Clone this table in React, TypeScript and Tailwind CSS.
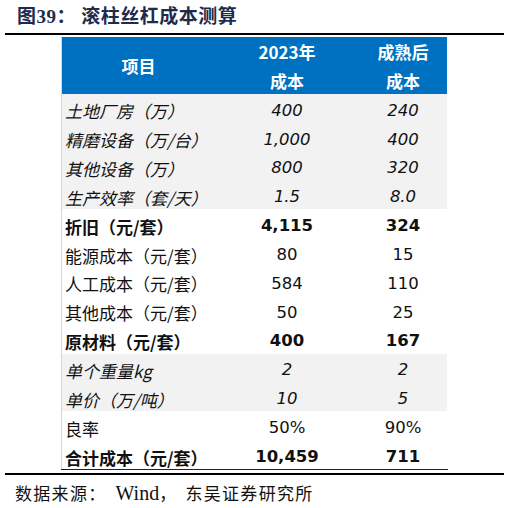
import React from "react";

type Row = {
  label: string;
  a: string;
  b: string;
  shade?: boolean;
  italic?: boolean;
  bold?: boolean;
};

const rows: Row[] = [
  { label: "土地厂房（万）", a: "400", b: "240", shade: true, italic: true },
  { label: "精磨设备（万/台）", a: "1,000", b: "400", shade: true, italic: true },
  { label: "其他设备（万）", a: "800", b: "320", shade: true, italic: true },
  { label: "生产效率（套/天）", a: "1.5", b: "8.0", shade: true, italic: true },
  { label: "折旧（元/套）", a: "4,115", b: "324", bold: true },
  { label: "能源成本（元/套）", a: "80", b: "15" },
  { label: "人工成本（元/套）", a: "584", b: "110" },
  { label: "其他成本（元/套）", a: "50", b: "25" },
  { label: "原材料（元/套）", a: "400", b: "167", bold: true },
  { label: "单个重量kg", a: "2", b: "2", shade: true, italic: true },
  { label: "单价（万/吨）", a: "10", b: "5", shade: true, italic: true },
  { label: "良率", a: "50%", b: "90%" },
  { label: "合计成本（元/套）", a: "10,459", b: "711", bold: true },
];

const cjk = "font-['Noto_Sans_CJK_SC',sans-serif]";
const num = "font-['DejaVu_Sans','Noto_Sans_CJK_SC',sans-serif]";

export default function App() {
  return (
    <div className="w-[509px] h-[508px] bg-white overflow-hidden">
      {/* title */}
      <div className="h-[33px] pl-[17px] pt-[5px] text-[19px] leading-[24px] font-bold text-[#1f2b4d] font-['Liberation_Serif','Noto_Sans_CJK_SC',serif] tracking-[0.5px]">
        图39：&nbsp;滚柱丝杠成本测算
      </div>
      <div className="ml-[5px] mr-[5px] h-[2px] bg-black" />

      {/* table */}
      <div className="mt-[2px] ml-[61px] w-[386px] border-l border-[#d4d4d4]">
        <div className={`grid grid-cols-[153px_144px_88px] h-[57px] bg-[#0070c0] text-white font-bold text-[17px] ${cjk}`}>
          <div className="flex items-center justify-center">项目</div>
          <div className="flex flex-col items-center justify-center leading-[29px]">
            <span>2023年</span>
            <span>成本</span>
          </div>
          <div className="flex flex-col items-center justify-center leading-[29px]">
            <span>成熟后</span>
            <span>成本</span>
          </div>
        </div>
        {rows.map((r) => (
          <div
            key={r.label}
            className={`grid grid-cols-[153px_144px_88px] h-[28.85px] pt-[5px] items-center text-[#111] ${
              r.shade ? "bg-[#f2f2f2]" : "bg-white"
            } ${r.italic ? "italic" : ""} ${r.bold ? "font-bold" : ""}`}
          >
            <div className={`pl-[3px] text-[17px] leading-none whitespace-nowrap ${cjk}`}>{r.label}</div>
            <div className={`text-center text-[16.5px] leading-none ${num}`}>{r.a}</div>
            <div className={`text-center text-[16.5px] leading-none ${num}`}>{r.b}</div>
          </div>
        ))}
      </div>
      <div className="ml-[61px] w-[387px] h-px bg-[#222]" />
      <div className="mt-[3px] ml-[5px] mr-[5px] h-[2px] bg-black" />

      {/* source */}
      <div className="pl-[15px] pt-[8px] text-[17px] leading-[20px] tracking-[1.3px] text-[#111] font-['Liberation_Serif','Noto_Sans_CJK_SC',serif] whitespace-nowrap">
        数据来源：<span className="ml-[9px] text-[20px] tracking-normal">Wind</span>
        <span>，</span>
        <span className="ml-[8px]">东吴证券研究所</span>
      </div>
    </div>
  );
}
